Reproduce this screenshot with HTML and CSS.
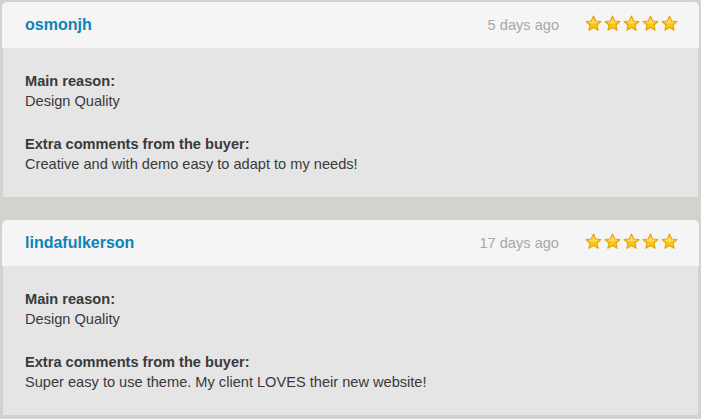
FILE: index.html
```html
<!DOCTYPE html>
<html lang="en">
<head>
  <meta charset="UTF-8">
  <title>Reviews</title>
  <link rel="stylesheet" href="styles.css">
</head>
<body>
  <svg width="0" height="0" class="defs">
    <defs>
      <symbol id="star" viewBox="0 0 16 16">
        <polygon points="8,1 10.1,5.6 15,6.1 11.3,9.4 12.4,14.4 8,11.8 3.6,14.4 4.7,9.4 1,6.1 5.9,5.6" fill="#fcc419" stroke="#e2a30a" stroke-width="1" stroke-linejoin="round"/>
        <polygon points="8,2.6 9.5,6.2 13.4,6.6 8,8.5 2.6,6.6 6.5,6.2" fill="#ffd95a"/>
      </symbol>
    </defs>
  </svg>

  <div class="reviews">
    <div class="review">
      <div class="review-head">
        <span class="user">osmonjh</span>
        <span class="date">5 days ago</span>
        <span class="stars">
          <svg><use href="#star"/></svg><svg><use href="#star"/></svg><svg><use href="#star"/></svg><svg><use href="#star"/></svg><svg><use href="#star"/></svg>
        </span>
      </div>
      <div class="review-body">
        <p><b>Main reason:</b><br>Design Quality</p>
        <p><b>Extra comments from the buyer:</b><br>Creative and with demo easy to adapt to my needs!</p>
      </div>
    </div>

    <div class="review">
      <div class="review-head">
        <span class="user">lindafulkerson</span>
        <span class="date">17 days ago</span>
        <span class="stars">
          <svg><use href="#star"/></svg><svg><use href="#star"/></svg><svg><use href="#star"/></svg><svg><use href="#star"/></svg><svg><use href="#star"/></svg>
        </span>
      </div>
      <div class="review-body">
        <p><b>Main reason:</b><br>Design Quality</p>
        <p><b>Extra comments from the buyer:</b><br>Super easy to use theme. My client LOVES their new website!</p>
      </div>
    </div>
  </div>
</body>
</html>
```

FILE: styles.css
```css
body {
  margin: 0;
  background: #d3d2cf;
  font-family: "Liberation Sans", Arial, sans-serif;
  color: #3a3a3a;
  font-size: 14.6px;
}

.defs {
  position: absolute;
}

.reviews {
  display: flex;
  flex-direction: column;
  gap: 23px;
  padding: 2px 2px 3px 2px;
}

.review-head {
  display: flex;
  align-items: center;
  height: 46px;
  padding: 0 21px 0 23px;
  background: #f5f5f5;
  border-radius: 5px 5px 0 0;
}

.user {
  flex: 1;
  font-size: 16px;
  font-weight: bold;
  color: #0f82b5;
}

.date {
  color: #a8a8a8;
  margin-right: 26px;
}

.stars {
  display: flex;
  gap: 2px;
  margin-top: -4px;
}

.stars svg {
  width: 17px;
  height: 17px;
}

.review-body {
  background: #e5e5e5;
  margin: 0 1px;
  padding: 23px 22px 23px;
  line-height: 20px;
}

.review-body p {
  margin: 0 0 23px 0;
}

.review-body p:last-child {
  margin-bottom: 0;
}

.review-body b {
  color: #3a3a3a;
}
```
